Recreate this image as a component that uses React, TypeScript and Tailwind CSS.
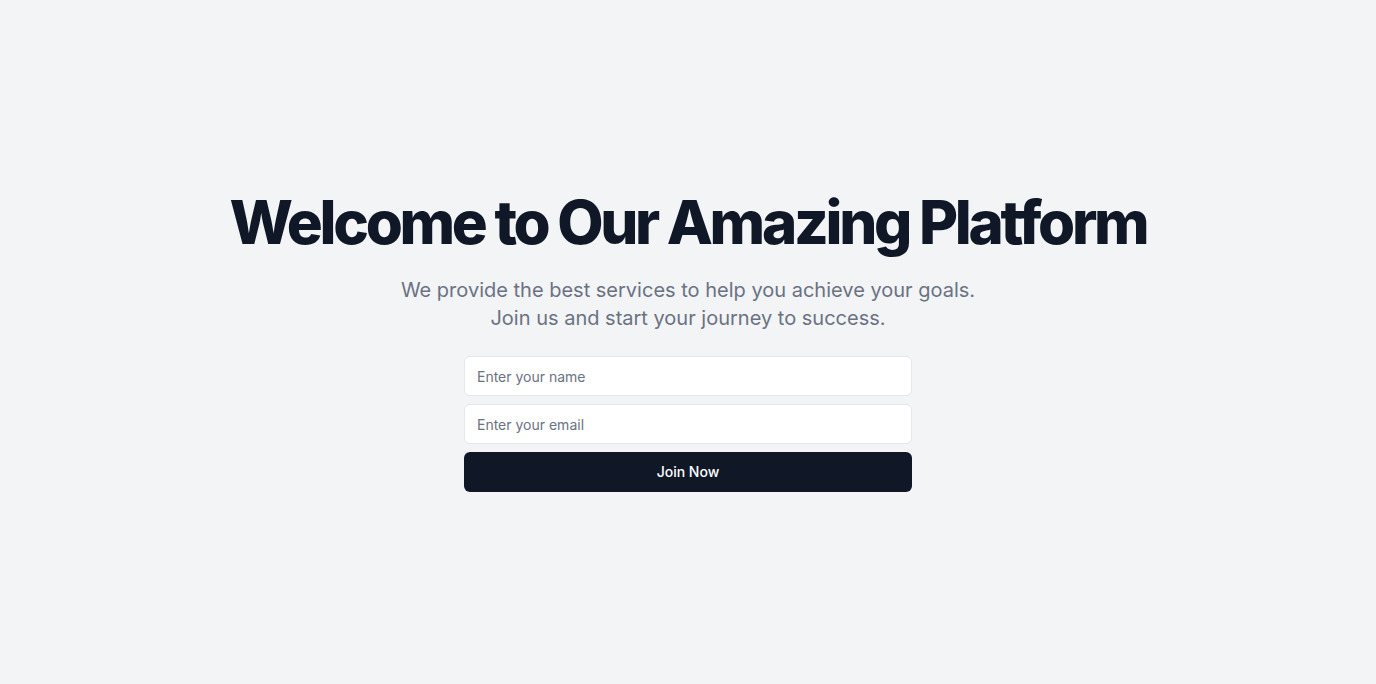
export default function App() {
  return (
    <div className="min-h-screen bg-gray-100 flex items-center justify-center font-['Inter',sans-serif]">
      <div className="text-center">
        <h1 className="text-6xl font-extrabold tracking-[-0.055em] text-gray-900">
          Welcome to Our Amazing Platform
        </h1>
        <p className="mt-6 text-xl leading-7 text-gray-500">
          We provide the best services to help you achieve your goals.
          <br />
          Join us and start your journey to success.
        </p>
        <form className="mt-6 mx-auto w-[448px] space-y-2">
          <input
            type="text"
            placeholder="Enter your name"
            className="block w-full h-10 px-3 rounded-md border border-gray-200 bg-white text-sm text-gray-900 placeholder:text-gray-500 outline-none"
          />
          <input
            type="email"
            placeholder="Enter your email"
            className="block w-full h-10 px-3 rounded-md border border-gray-200 bg-white text-sm text-gray-900 placeholder:text-gray-500 outline-none"
          />
          <button
            type="button"
            className="block w-full h-10 rounded-md bg-gray-900 text-sm font-medium text-white"
          >
            Join Now
          </button>
        </form>
      </div>
    </div>
  )
}
